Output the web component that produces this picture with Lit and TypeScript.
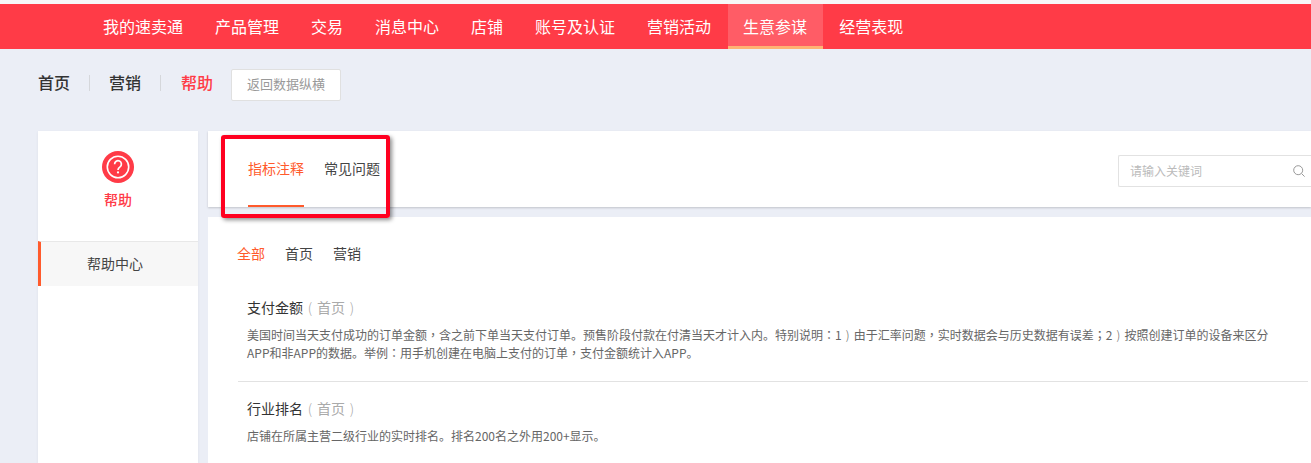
import { LitElement, html, css } from "lit";
import { customElement } from "lit/decorators.js";

const NAV = ["我的速卖通", "产品管理", "交易", "消息中心", "店铺", "账号及认证", "营销活动", "生意参谋", "经营表现"];

@customElement("app-root")
export class AppRoot extends LitElement {
  static styles = css`
    :host {
      display: block;
      position: relative;
      width: 1311px;
      height: 463px;
      overflow: hidden;
      background: #ebeef6;
      font-family: "Noto Sans CJK SC", "Liberation Sans", sans-serif;
      color: #333;
    }
    .strip { height: 4px; background: #f7f7f7; }
    .nav { height: 45px; background: #ff3b47; display: flex; padding-left: 87px; color: #fff; font-size: 16px; }
    .nav-item { padding: 0 16px; line-height: 45px; box-sizing: border-box; }
    .nav-item.active { background: #ff5c66; border-bottom: 3px solid #ffb273; margin-left: 1px; padding-left: 15px; }
    .sub { display: flex; align-items: center; height: 32px; margin: 20px 0 30px 38px; font-size: 16px; font-weight: 500; color: #333; }
    .sub span { padding-bottom: 6px; }
    .sep { width: 1px; height: 16px; background: #d5d7db; margin: 0 19px 4px 19px; }
    .sep.b { margin-right: 20px; }
    .sub .cur { color: #ff3b47; }
    .back {
      width: 110px; height: 32px; box-sizing: border-box; margin-left: 18px; padding-bottom: 4px;
      border: 1px solid #e0e0e0; border-radius: 2px; background: #fff; color: #999;
      font-size: 13px; font-weight: 400; display: flex; align-items: center; justify-content: center;
    }
    .body { display: flex; gap: 10px; margin-left: 38px; align-items: flex-start; }
    .side { width: 160px; height: 332px; background: #fff; flex: none; box-shadow: 0 1px 3px rgba(0,0,0,.06); }
    .side-head { height: 110px; display: flex; flex-direction: column; align-items: center; padding-top: 20px; box-sizing: border-box; color: #ff3b47; font-size: 14px; font-weight: 500; gap: 6px; }
    .side-item {
      height: 45px; background: #f7f7f7; border-top: 1px solid #e8e8e8; border-left: 3px solid #ff5a2c; box-sizing: border-box;
      display: flex; align-items: center; justify-content: center; font-size: 14px; color: #444; padding: 0 9px 3px 0;
    }
    .main { flex: 1; min-width: 0; }
    .tabs { height: 76px; background: #fff; display: flex; align-items: flex-start; padding-left: 40px; box-shadow: 0 1px 2px rgba(0,0,0,.18); position: relative; }
    .tab { font-size: 14px; line-height: 20px; padding-top: 27px; height: 76px; box-sizing: border-box; color: #444; margin-right: 20px; }
    .tab.on { color: #ff5a2c; border-bottom: 2px solid #ff5a2c; }
    .search {
      margin-left: auto; width: 193px; height: 32px; margin-top: 24px; box-sizing: border-box;
      border: 1px solid #e2e2e2; border-right: none; border-radius: 2px 0 0 2px; display: flex; align-items: center;
      padding-left: 11px; font-size: 12px; color: #bbb; justify-content: space-between;
    }
    .search span { padding-bottom: 2px; }
    .search svg { margin-right: 5px; }
    .content { margin-top: 10px; background: #fff; height: 246px; padding: 0 3px 0 30px; box-sizing: border-box; }
    .filters { display: flex; gap: 20px; padding-top: 26px; margin-left: -1px; font-size: 14px; line-height: 20px; color: #444; }
    .filters .on { color: #ff5a2c; }
    .entry { padding-left: 9px; }
    .entry.first { padding-top: 34px; height: 84px; border-bottom: 1px solid #e2e2e2; }
    .entry.second { padding-top: 16px; }
    .t { font-size: 14px; line-height: 20px; color: #333; white-space: nowrap; }
    .t .m { color: #aaa; }
    .par { display: inline-block; width: 14px; text-align: center; font-weight: 300; }
    .d { font-size: 12px; line-height: 18px; color: #666; margin-top: 9px; white-space: nowrap; }
    .l { display: block; }
    .d .tc { font-family: "Noto Sans CJK TC", sans-serif; }
    .d .par { width: 12px; }
    .mark {
      position: absolute; left: 221px; top: 135px; width: 169px; height: 83px; box-sizing: border-box;
      border: 4px solid #ff0020; border-radius: 3px; box-shadow: 2px 2px 4px rgba(0,0,0,.45);
    }
  `;

  private title(name: string) {
    return html`<div class="t"><span>${name}</span><span class="par m">(</span><span class="m">首页</span><span class="par m">)</span></div>`;
  }

  render() {
    const c = html`<span class="tc">，</span>`;
    const k = html`<span class="tc">：</span>`;
    const s = html`<span class="tc">；</span>`;
    const p = html`<span class="par">)</span>`;
    return html`
      <div class="strip"></div>
      <div class="nav">
        ${NAV.map((n) => html`<div class="nav-item ${n === "生意参谋" ? "active" : ""}">${n}</div>`)}
      </div>
      <div class="sub">
        <span>首页</span><i class="sep"></i><span>营销</span><i class="sep b"></i><span class="cur">帮助</span>
        <div class="back">返回数据纵横</div>
      </div>
      <div class="body">
        <div class="side">
          <div class="side-head">
            <svg width="32" height="32" viewBox="0 0 32 32">
              <circle cx="16" cy="16" r="16" fill="#ff3b47" />
              <circle cx="16" cy="16" r="10.7" fill="none" stroke="#fff" stroke-width="1.6" />
              <path d="M12.6 13.2a3.4 3.4 0 1 1 5.4 2.7c-1.3.9-2 1.5-2 3" fill="none" stroke="#fff" stroke-width="1.7" />
              <circle cx="16" cy="21.4" r="1.1" fill="#fff" />
            </svg>
            <div>帮助</div>
          </div>
          <div class="side-item">帮助中心</div>
        </div>
        <div class="main">
          <div class="tabs">
            <div class="tab on">指标注释</div>
            <div class="tab">常见问题</div>
            <div class="search">
              <span>请输入关键词</span>
              <svg width="14" height="14" viewBox="0 0 14 14" fill="none" stroke="#999" stroke-width="1">
                <circle cx="6.2" cy="6.2" r="4.5" /><path d="M9.6 9.6l3 3" />
              </svg>
            </div>
          </div>
          <div class="content">
            <div class="filters"><span class="on">全部</span><span>首页</span><span>营销</span></div>
            <div class="entry first">
              ${this.title("支付金额")}
              <div class="d">
                <div class="l"><span>美国时间当天支付成功的订单金额</span>${c}<span>含之前下单当天支付订单。预售阶段付款在付清当天才计入内。特别说明</span>${k}<span>1</span>${p}<span>由于汇率问题</span>${c}<span>实时数据会与历史数据有误差</span>${s}<span>2</span>${p}<span>按照创建订单的设备来区分</span></div>
                <div class="l"><span>APP和非APP的数据。举例</span>${k}<span>用手机创建在电脑上支付的订单</span>${c}<span>支付金额统计入APP。</span></div>
              </div>
            </div>
            <div class="entry second">
              ${this.title("行业排名")}
              <div class="d"><span>店铺在所属主营二级行业的实时排名。排名200名之外用200+显示。</span></div>
            </div>
          </div>
        </div>
      </div>
      <div class="mark"></div>
    `;
  }
}
